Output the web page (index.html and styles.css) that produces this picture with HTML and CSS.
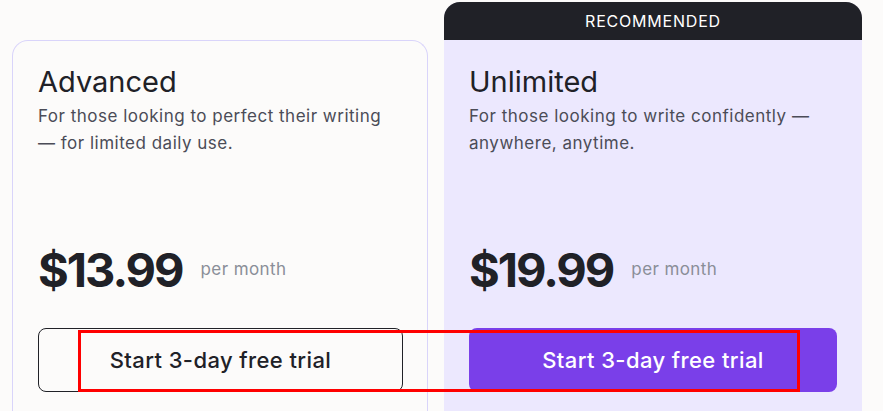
FILE: index.html
```html
<!DOCTYPE html>
<html lang="en">
<head>
  <meta charset="UTF-8">
  <title>Plans</title>
  <link rel="stylesheet" href="styles.css">
</head>
<body>
  <div class="plans">
    <div class="plan plan-advanced">
      <div class="plan-body">
        <h2 class="plan-name">Advanced</h2>
        <p class="plan-desc">For those looking to perfect their writing — for limited daily use.</p>
        <div class="plan-price">
          <span class="amount">$13.99</span>
          <span class="period">per month</span>
        </div>
        <button class="btn btn-outline">Start 3-day free trial</button>
      </div>
    </div>

    <div class="plan plan-unlimited">
      <div class="plan-badge">RECOMMENDED</div>
      <div class="plan-body">
        <h2 class="plan-name">Unlimited</h2>
        <p class="plan-desc">For those looking to write confidently — anywhere, anytime.</p>
        <div class="plan-price">
          <span class="amount">$19.99</span>
          <span class="period">per month</span>
        </div>
        <button class="btn btn-primary">Start 3-day free trial</button>
      </div>
    </div>

    <div class="highlight"></div>
  </div>
</body>
</html>
```

FILE: styles.css
```css
* { box-sizing: border-box; font-family: Inter, "Noto Sans", sans-serif; }
body { margin: 0; padding: 0; background: #fcfbfa; overflow: hidden; }

.plans {
  position: relative;
  display: flex;
  gap: 16px;
  padding: 2px 0 0 12px;
  height: 411px;
}

.plan {
  display: flex;
  flex-direction: column;
}

.plan-advanced {
  width: 416px;
  margin-top: 38px;
  border: 1px solid #d9d4fa;
  border-bottom: none;
  border-radius: 16px 16px 0 0;
  background: #fcfbfa;
}

.plan-unlimited {
  width: 418px;
  border-radius: 16px 16px 0 0;
  background: #ece8fe;
  overflow: hidden;
}

.plan-badge {
  height: 38px;
  background: #202127;
  color: #fff;
  font-size: 16px;
  letter-spacing: 0.8px;
  text-align: center;
  line-height: 38px;
}

.plan-body {
  flex: 1;
  padding: 24px 25px 0 25px;
}

.plan-advanced .plan-body {
  padding: 23px 24px 0 25px;
}

.plan-name {
  margin: 0;
  font-size: 29px;
  font-weight: 400;
  line-height: 36px;
  color: #202127;
}

.plan-desc {
  margin: 3px 0 0 0;
  font-size: 17px;
  letter-spacing: 0.5px;
  line-height: 27px;
  color: #4b4c57;
  max-width: 352px;
  height: 54px;
}

.plan-price {
  display: flex;
  align-items: baseline;
  gap: 18px;
  margin-top: 85px;
}

.amount {
  font-size: 47px;
  font-weight: 700;
  letter-spacing: -2px;
  color: #202127;
  line-height: 56px;
}

.period {
  font-size: 17px;
  letter-spacing: 0.4px;
  color: #8a8e98;
  position: relative;
  top: -12px;
}

.btn {
  display: block;
  width: 100%;
  height: 64px;
  margin-top: 30px;
  border-radius: 8px;
  font-size: 22px;
  letter-spacing: 0.4px;
  font-weight: 500;
  cursor: pointer;
}

.btn-outline {
  background: transparent;
  border: 1px solid #202127;
  color: #202127;
}

.btn-primary {
  background: #7a3fe9;
  border: none;
  color: #fff;
}

.highlight {
  position: absolute;
  left: 78px;
  top: 330px;
  width: 722px;
  height: 62px;
  border: 3px solid #ff0000;
  pointer-events: none;
}
```
